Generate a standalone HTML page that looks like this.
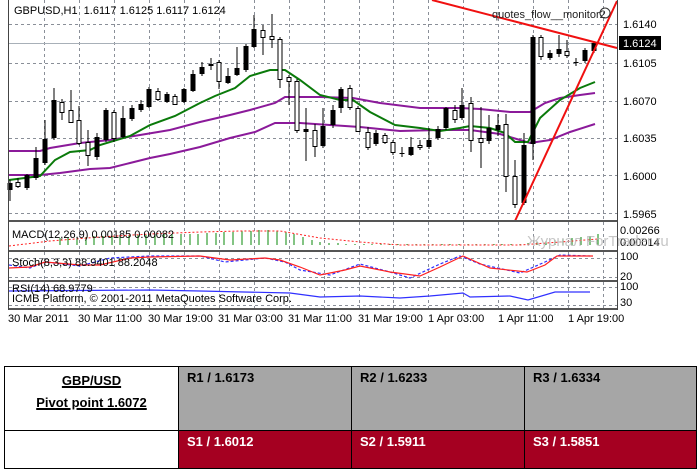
<!DOCTYPE html>
<html><head><meta charset="utf-8">
<style>
body{margin:0;width:698px;height:472px;background:#fff;overflow:hidden;position:relative;font-family:"Liberation Sans",sans-serif}
svg{position:absolute;left:0;top:0}
table{position:absolute;left:4px;top:366px;width:692px;table-layout:fixed;border-collapse:collapse;font-family:"Liberation Sans",sans-serif;font-weight:bold;font-size:13px}
td{border:1px solid #000;vertical-align:top;padding:0}
</style></head><body>
<svg width="698" height="330" viewBox="0 0 698 330" font-family="Liberation Sans, sans-serif">
<g stroke="#8a8f98" stroke-dasharray="3,3" stroke-width="1">
<line x1="9" y1="24.5" x2="617" y2="24.5"/><line x1="9" y1="63.5" x2="617" y2="63.5"/><line x1="9" y1="101.5" x2="617" y2="101.5"/><line x1="9" y1="138.5" x2="617" y2="138.5"/><line x1="9" y1="175.5" x2="617" y2="175.5"/><line x1="9" y1="213.5" x2="617" y2="213.5"/>
<line x1="44.5" y1="0" x2="44.5" y2="310"/><line x1="79.5" y1="0" x2="79.5" y2="310"/><line x1="114.5" y1="0" x2="114.5" y2="310"/><line x1="149.5" y1="0" x2="149.5" y2="310"/><line x1="184.5" y1="0" x2="184.5" y2="310"/><line x1="219.5" y1="0" x2="219.5" y2="310"/><line x1="254.5" y1="0" x2="254.5" y2="310"/><line x1="289.5" y1="0" x2="289.5" y2="310"/><line x1="324.5" y1="0" x2="324.5" y2="310"/><line x1="359.5" y1="0" x2="359.5" y2="310"/><line x1="393.5" y1="0" x2="393.5" y2="310"/><line x1="428.5" y1="0" x2="428.5" y2="310"/><line x1="463.5" y1="0" x2="463.5" y2="310"/><line x1="498.5" y1="0" x2="498.5" y2="310"/><line x1="533.5" y1="0" x2="533.5" y2="310"/><line x1="568.5" y1="0" x2="568.5" y2="310"/><line x1="603.5" y1="0" x2="603.5" y2="310"/>
<line x1="9" y1="258.5" x2="617" y2="258.5"/><line x1="9" y1="277.5" x2="617" y2="277.5"/><line x1="9" y1="287.5" x2="617" y2="287.5"/><line x1="9" y1="305.5" x2="617" y2="305.5"/>
</g>
<line x1="9" y1="43.5" x2="617" y2="43.5" stroke="#a8b0b8" stroke-width="1"/>
<polyline fill="none" stroke="#8b1a9a" stroke-width="2" points="9,151 40,151 50,148 80,143 110,140 140,135 170,130 200,122 230,115 250,110 275,103 285,97 320,97 353,98 380,103 420,108 460,108 480,109 510,112 530,112 545,103 560,98 580,95 595,93"/>
<polyline fill="none" stroke="#8b1a9a" stroke-width="2" points="9,175 40,175 60,173 90,169 110,168 130,163 150,158 170,154 200,147 230,138 255,132 275,123 300,123 330,125 360,127 400,131 440,130 470,130 500,134 520,140 530,143 550,140 570,132 595,124"/>
<polyline fill="none" stroke="#0a7a0a" stroke-width="2" points="9,180 40,176 55,160 70,152 90,150 100,145 130,136 150,125 175,116 200,103 215,96 235,88 250,76 270,70 285,70 300,80 320,95 340,100 353,100 370,112 395,125 420,128 440,131 460,128 470,126 490,128 505,133 515,142 528,142 540,118 560,100 580,88 595,82"/>
<g stroke="#000" stroke-width="1">
<path d="M10 180V201M18 178V188M27 174V190M36 147V180M45 120V165M54 88V140M62 99V120M71 90V123M79 106V145M88 130V166M97 133V160M106 108V142M114 110V142M123 106V138M132 105V121M141 100V112M149 87V108M158 88V101M167 92V103M175 94V105M184 88V103M193 70V92M202 62V76M211 58V70M219 60V89M228 68V84M237 47V76M246 44V72M254 15V48M263 25V55M272 14V48M280 37V88M289 75V105M297 79V133M306 108V161M315 124V157M323 108V148M333 105V128M341 87V113M350 85V110M358 106V132M368 127V150M376 130V146M385 133V144M393 140V155M402 147V157M411 137V156M420 140V150M429 128V149M438 126V140M446 107V130M455 105V123M462 88V120M471 97V152M481 107V168M489 115V144M498 114V136M506 114V192M515 160V208M524 133V205M533 35V160M541 35V60M550 50V60M559 35V57M567 40V58M576 58V66M585 48V63M594 41V53"/>
</g>
<g fill="#000">
<rect x="7.5" y="183" width="5" height="7"/><rect x="24.5" y="175" width="5" height="13"/><rect x="33.5" y="158" width="5" height="20"/><rect x="42.5" y="139" width="5" height="24"/><rect x="51.5" y="100" width="5" height="38"/><rect x="94.5" y="137" width="5" height="20"/><rect x="103.5" y="110" width="5" height="30"/><rect x="120.5" y="118" width="5" height="19"/><rect x="129.5" y="108" width="5" height="11"/><rect x="138.5" y="104" width="5" height="6"/><rect x="146.5" y="89" width="5" height="18"/><rect x="164.5" y="94" width="5" height="8"/><rect x="181.5" y="89" width="5" height="13"/><rect x="190.5" y="74" width="5" height="17"/><rect x="199.5" y="67" width="5" height="7"/><rect x="208.5" y="64" width="5" height="2"/><rect x="225.5" y="76" width="5" height="7"/><rect x="234.5" y="68" width="5" height="7"/><rect x="243.5" y="46" width="5" height="24"/><rect x="251.5" y="29" width="5" height="18"/><rect x="303.5" y="129" width="5" height="3"/><rect x="320.5" y="126" width="5" height="20"/><rect x="330.5" y="110" width="5" height="15"/><rect x="338.5" y="89" width="5" height="19"/><rect x="373.5" y="133" width="5" height="11"/><rect x="399.5" y="153" width="5" height="1"/><rect x="408.5" y="147" width="5" height="8"/><rect x="426.5" y="140" width="5" height="7"/><rect x="435.5" y="129" width="5" height="9"/><rect x="443.5" y="108" width="5" height="20"/><rect x="459.5" y="105" width="5" height="13"/><rect x="486.5" y="128" width="5" height="13"/><rect x="495.5" y="125" width="5" height="5"/><rect x="521.5" y="145" width="5" height="58"/><rect x="530.5" y="37" width="5" height="107"/><rect x="547.5" y="53" width="5" height="5"/><rect x="556.5" y="49" width="5" height="5"/><rect x="573.5" y="62" width="5" height="1"/><rect x="582.5" y="50" width="5" height="11"/><rect x="591.5" y="43" width="5" height="8"/>
</g>
<g fill="#fff" stroke="#000" stroke-width="1">
<rect x="16" y="182.5" width="4" height="4"/><rect x="60" y="102.5" width="4" height="10"/><rect x="69" y="110.5" width="4" height="12"/><rect x="77" y="120.5" width="4" height="23"/><rect x="86" y="142.5" width="4" height="13"/><rect x="112" y="112.5" width="4" height="26"/><rect x="156" y="91.5" width="4" height="8"/><rect x="173" y="96.5" width="4" height="8"/><rect x="217" y="62.5" width="4" height="19"/><rect x="261" y="30.5" width="4" height="7"/><rect x="270" y="36.5" width="4" height="3"/><rect x="278" y="39.5" width="4" height="40"/><rect x="287" y="77.5" width="4" height="4"/><rect x="295" y="81.5" width="4" height="49"/><rect x="313" y="130.5" width="4" height="16"/><rect x="348" y="88.5" width="4" height="19"/><rect x="356" y="108.5" width="4" height="23"/><rect x="366" y="132.5" width="4" height="15"/><rect x="383" y="135.5" width="4" height="7"/><rect x="391" y="142.5" width="4" height="10"/><rect x="418" y="145.5" width="4" height="2"/><rect x="453" y="110.5" width="4" height="9"/><rect x="469" y="103.5" width="4" height="37"/><rect x="479" y="138.5" width="4" height="4"/><rect x="504" y="124.5" width="4" height="52"/><rect x="513" y="176.5" width="4" height="28"/><rect x="539" y="37.5" width="4" height="19"/><rect x="565" y="51.5" width="4" height="4"/>
</g>
<line x1="432" y1="0" x2="617" y2="48" stroke="#f01010" stroke-width="2"/>
<line x1="515" y1="221" x2="617" y2="1" stroke="#f01010" stroke-width="2"/>
<g stroke="#0a8a0a" stroke-width="1">
<path d="M190 245V234M198 245V234M207 245V233M216 245V233M224 245V232M233 245V232M242 245V231M251 245V231M259 245V230M268 245V230M277 245V231M286 245V232M294 245V234M303 245V237M312 245V240M320 245V242M329 245V243M338 245V243M346 245V244M355 245V244M364 245V244M372 245V244M381 245V244M390 245V244M398 245V244M407 245V244M416 245V244M424 245V244M433 245V244M442 245V244M450 245V244M459 245V244M468 245V244M476 245V244M485 245V244M494 245V244M502 245V244M511 245V244M520 245V244M528 245V243M537 245V242M546 245V241M555 245V240M563 245V239M572 245V238M581 245V237M590 245V236M598 245V234"/>
<path d="M60 245V238M68 245V238M77 245V237M86 245V237M94 245V236M103 245V236M112 245V236M120 245V235M129 245V235M138 245V235M146 245V235M155 245V234M164 245V234M172 245V234M181 245V234"/>
</g>
<polyline fill="none" stroke="#ff2020" stroke-dasharray="2,2" points="9,246 50,241 100,237 150,234 200,232 240,231 280,231 320,238 360,242 400,245 440,245 480,245 520,245 560,242 598,239"/>
<polyline fill="none" stroke="#3030ff" stroke-dasharray="3,2" stroke-width="1.2" points="9,265 30,268 45,262 80,266 110,258 150,256 200,256 225,262 265,258 285,262 300,270 330,275 360,264 390,272 410,278 440,264 460,256 480,264 520,273 545,262 560,255 590,256"/>
<polyline fill="none" stroke="#ff2020" stroke-width="1.2" points="9,268 30,267 45,262 80,265 100,265 130,258 150,257 200,256 230,260 265,258 280,260 300,267 320,275 345,270 360,266 390,272 420,276 440,267 463,256 490,268 527,272 545,265 557,256 593,256"/>
<polyline fill="none" stroke="#3030ff" stroke-width="1.2" points="9,291 150,290 200,291 290,293 320,297 360,296 400,298 430,296 463,293 470,297 510,296 528,300 555,292 590,292"/>
<g fill="#555"><rect x="8" y="220" width="610" height="2"/><rect x="8" y="250" width="610" height="2"/><rect x="8" y="280" width="610" height="2"/><rect x="8" y="308" width="610" height="2"/></g>
<rect x="8" y="0" width="1" height="310" fill="#444"/><rect x="617" y="0" width="1" height="310" fill="#444"/>
<g font-size="11" fill="#000">
<text x="14" y="14" xml:space="preserve">GBPUSD,H1  1.6117 1.6125 1.6117 1.6124</text>
<text x="492" y="18" fill="#222">quotes_flow__monitor2</text>
<text x="623" y="28">1.6140</text><text x="623" y="67">1.6105</text><text x="623" y="105">1.6070</text><text x="623" y="142">1.6035</text><text x="623" y="180">1.6000</text><text x="623" y="218">1.5965</text>
<text x="12" y="238">MACD(12,26,9) 0.00185 0.00082</text>
<text x="620" y="234">0.00266</text><text x="620" y="246">0.00014</text>
<text x="12" y="266">Stoch(8,3,3) 88.9401 88.2048</text>
<text x="620" y="260">100</text><text x="620" y="280">20</text>
<text x="12" y="292">RSI(14) 68.9779</text>
<text x="12" y="302">ICMB Platform, © 2001-2011 MetaQuotes Software Corp.</text>
<text x="620" y="290">100</text><text x="620" y="306">30</text>
<text x="8" y="322">30 Mar 2011</text><text x="78" y="322">30 Mar 11:00</text><text x="148" y="322">30 Mar 19:00</text><text x="218" y="322">31 Mar 03:00</text><text x="288" y="322">31 Mar 11:00</text><text x="358" y="322">31 Mar 19:00</text><text x="428" y="322">1 Apr 03:00</text><text x="498" y="322">1 Apr 11:00</text><text x="568" y="322">1 Apr 19:00</text>
</g>
<circle cx="605" cy="13" r="5" fill="none" stroke="#333"/>
<rect x="619" y="36" width="42" height="14" fill="#000"/>
<text x="623" y="47" font-size="11" fill="#fff">1.6124</text>
<text x="527" y="246" font-size="15" fill="#b8b8b8" opacity="0.8">Журнал ForTrader.ru</text>
</svg>
<table>
<colgroup><col style="width:174px"><col style="width:173px"><col style="width:173px"><col style="width:172px"></colgroup>
<tr style="height:64px">
<td style="background:#fff;text-align:center;padding-top:3px;line-height:22px"><span style="text-decoration:underline;text-decoration-thickness:2px">GBP/USD</span><br><span style="text-decoration:underline;text-decoration-thickness:2px">Pivot point 1.6072</span></td>
<td style="background:#a6a6a6;padding:3px 0 0 8px">R1 / 1.6173</td>
<td style="background:#a6a6a6;padding:3px 0 0 8px">R2 / 1.6233</td>
<td style="background:#a6a6a6;padding:3px 0 0 8px">R3 / 1.6334</td>
</tr>
<tr style="height:38px">
<td style="background:#fff"></td>
<td style="background:#a50021;color:#fff;padding:3px 0 0 8px">S1 / 1.6012</td>
<td style="background:#a50021;color:#fff;padding:3px 0 0 8px">S2 / 1.5911</td>
<td style="background:#a50021;color:#fff;padding:3px 0 0 8px">S3 / 1.5851</td>
</tr>
</table>
</body></html>
